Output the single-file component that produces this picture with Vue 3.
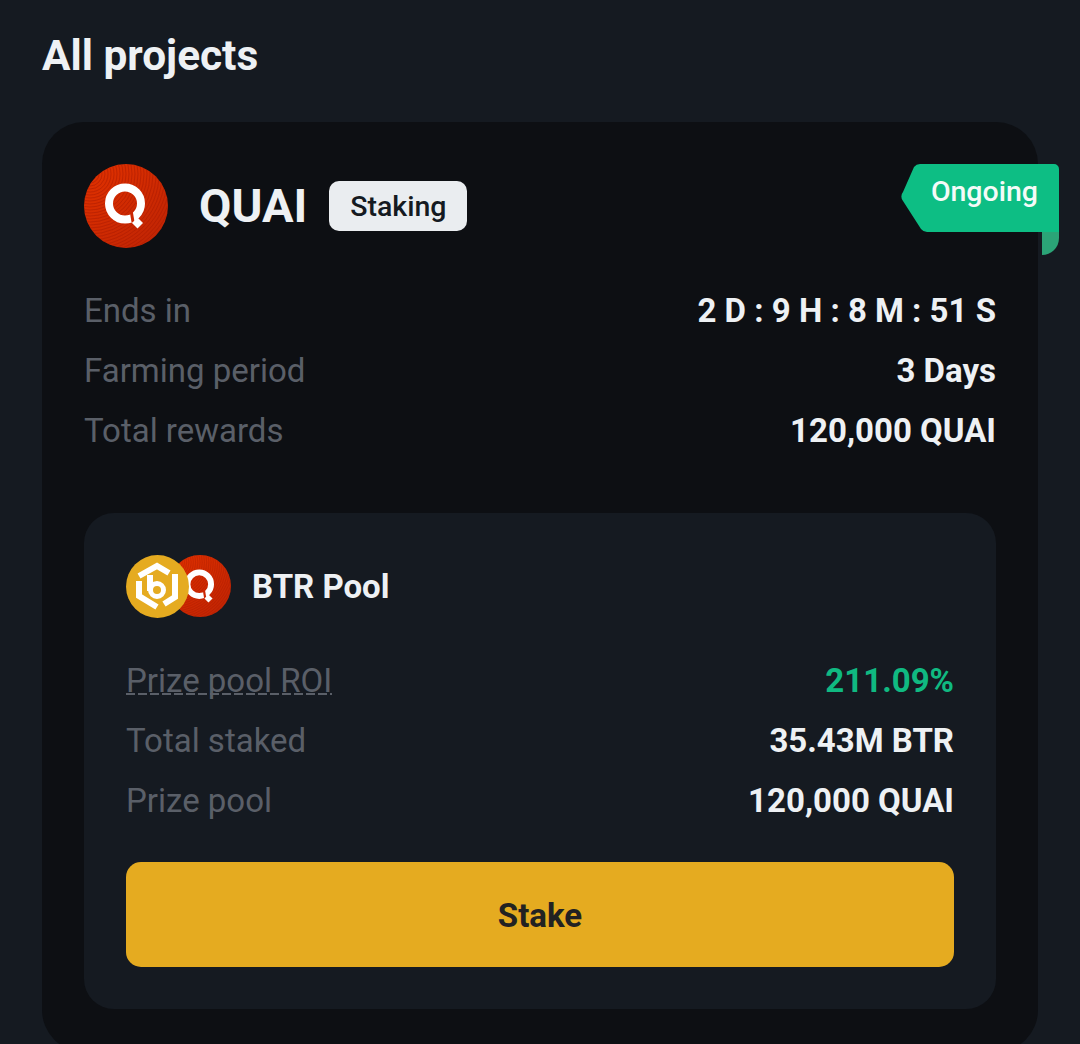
<script setup>
const stats = [
  { label: "Ends in", value: "2 D : 9 H : 8 M : 51 S" },
  { label: "Farming period", value: "3 Days" },
  { label: "Total rewards", value: "120,000 QUAI" },
]

const poolStats = [
  { label: "Prize pool ROI", value: "211.09%", hint: true, up: true },
  { label: "Total staked", value: "35.43M BTR" },
  { label: "Prize pool", value: "120,000 QUAI" },
]

// fine arcs for the engraved look of the QUAI coin
const arcs = Array.from({ length: 38 }, (_, i) => 6 + i * 3)
</script>

<template>
  <div class="page">
    <svg class="sprites" width="0" height="0">
      <defs>
        <clipPath id="quai-clip">
          <circle cx="42" cy="42" r="42" />
        </clipPath>
        <linearGradient id="quai-fill" x1="0.15" y1="0.1" x2="0.9" y2="0.95">
          <stop offset="0" stop-color="#de3000" />
          <stop offset="1" stop-color="#bf2404" />
        </linearGradient>
        <symbol id="quai-coin" viewBox="0 0 84 84">
          <circle cx="42" cy="42" r="42" fill="url(#quai-fill)" />
          <g clip-path="url(#quai-clip)" fill="none" stroke="#a81a04" stroke-opacity="0.5" stroke-width="1">
            <circle v-for="r in arcs" :key="r" cx="6" cy="10" :r="r" />
          </g>
          <circle cx="41" cy="39.5" r="16" fill="none" stroke="#fff" stroke-width="8" />
          <path d="M47 46l2 12" fill="none" stroke="#cb2703" stroke-width="3" />
          <path d="M53.500 53.500l5.500 5.500-5.500 5.500-5.500-5.500z" fill="#fff" />
        </symbol>
      </defs>
    </svg>

    <h1 class="page__title">All projects</h1>

    <section class="project">
      <div class="ribbon">
        <svg class="ribbon__shape" width="158" height="92" viewBox="0 0 158 92">
          <path d="M141 68v23c9 0 17-7 17-17v-6z" fill="#2ba477" />
          <path d="M19 0h134a5 5 0 0 1 5 5v63H26a8 8 0 0 1-6-3L2 37a7 7 0 0 1 0-9L13 3a8 8 0 0 1 6-3z" fill="#0dbe84" />
        </svg>
        <span class="ribbon__text">Ongoing</span>
      </div>

      <header class="project__head">
        <svg class="project__logo" width="84" height="84"><use href="#quai-coin" /></svg>
        <h2 class="project__name">QUAI</h2>
        <span class="project__tag">Staking</span>
      </header>

      <ul class="stats">
        <li v-for="row in stats" :key="row.label" class="stats__row">
          <span class="stats__label">{{ row.label }}</span>
          <span class="stats__value">{{ row.value }}</span>
        </li>
      </ul>

      <div class="pool">
        <div class="pool__head">
          <div class="pool__coins">
            <svg class="pool__quai" width="62" height="62"><use href="#quai-coin" /></svg>
            <svg class="pool__btr" width="63" height="63" viewBox="0 0 63 63">
              <circle cx="31.500" cy="31.500" r="31.500" fill="#e5ab20" />
              <g fill="none" stroke="#fff" stroke-width="6">
                <path d="M13 21l18-10 12 7" />
                <path d="M13 26v15l18 11" />
                <path d="M49 19v23l-11 7" />
                <path d="M24 20v16" />
                <circle cx="31" cy="35" r="6.500" stroke-width="5" />
              </g>
            </svg>
          </div>
          <span class="pool__name">BTR Pool</span>
        </div>

        <ul class="stats stats--pool">
          <li v-for="row in poolStats" :key="row.label" class="stats__row">
            <span class="stats__label" :class="{ 'stats__label--hint': row.hint }">{{ row.label }}</span>
            <span class="stats__value" :class="{ 'stats__value--up': row.up }">{{ row.value }}</span>
          </li>
        </ul>

        <button class="pool__stake" type="button">Stake</button>
      </div>
    </section>
  </div>
</template>

<style>
html,
body {
  margin: 0;
  background: #151a21;
}
</style>

<style scoped>
.page {
  box-sizing: border-box;
  height: 1044px;
  overflow: hidden;
  padding: 31px 42px 0;
  background: #151a21;
  font-family: Roboto, "Liberation Sans", sans-serif;
  color: #eef1f4;
}

.sprites {
  position: absolute;
}

.page__title {
  margin: 0 0 41px;
  font-size: 42.4px;
  line-height: 50px;
  font-weight: 700;
}

.project {
  position: relative;
  box-sizing: border-box;
  height: 930px;
  padding: 42px 42px 0;
  border-radius: 42px;
  background: #0d0f13;
}

.project__head {
  display: flex;
  align-items: center;
  height: 84px;
}

.project__logo {
  flex: none;
  margin-right: 31px;
}

.project__name {
  margin: 0 22px 0 0;
  font-size: 47px;
  font-weight: 700;
  line-height: 84px;
}

.project__tag {
  display: flex;
  align-items: center;
  height: 50px;
  padding: 0 21px;
  border-radius: 10px;
  background: #eaedf0;
  color: #151a21;
  font-size: 28.5px;
  font-weight: 500;
}

.ribbon {
  position: absolute;
  top: 42px;
  right: -21px;
  width: 158px;
  height: 92px;
}

.ribbon__shape {
  display: block;
}

.ribbon__text {
  position: absolute;
  top: 9px;
  right: 21px;
  color: #f4fbf8;
  font-size: 28.5px;
  line-height: 38px;
  font-weight: 500;
}

.stats {
  display: flex;
  flex-direction: column;
  gap: 24px;
  margin: 0;
  padding: 45px 0 0;
  list-style: none;
}

.stats--pool {
  padding-top: 0;
}

.stats__row {
  display: flex;
  justify-content: space-between;
  align-items: center;
  height: 36px;
  font-size: 33px;
  line-height: 36px;
}

.stats__label {
  color: #5a5f68;
}

.stats__label--hint {
  background: repeating-linear-gradient(90deg, #5a5f68 0 9px, transparent 9px 12px) 0 30px / 100% 2px no-repeat;
}

.stats__value {
  color: #eef1f4;
  font-weight: 700;
}

.stats__value--up {
  color: #10b981;
}

.pool {
  box-sizing: border-box;
  height: 496px;
  margin-top: 64px;
  padding: 42px;
  border-radius: 30px;
  background: #151a21;
}

.pool__head {
  display: flex;
  align-items: center;
  height: 63px;
  margin-bottom: 45px;
}

.pool__coins {
  position: relative;
  flex: none;
  width: 105px;
  height: 63px;
  margin-right: 21px;
}

.pool__quai {
  position: absolute;
  top: 0;
  right: 0;
}

.pool__btr {
  position: absolute;
  top: 0;
  left: 0;
}

.pool__name {
  font-size: 33px;
  font-weight: 700;
}

.pool__stake {
  display: block;
  width: 100%;
  height: 105px;
  margin-top: 43px;
  padding: 2px 0 0;
  border: 0;
  border-radius: 15px;
  background: #e5ab20;
  color: #222;
  font-family: inherit;
  font-size: 33px;
  font-weight: 700;
}
</style>
